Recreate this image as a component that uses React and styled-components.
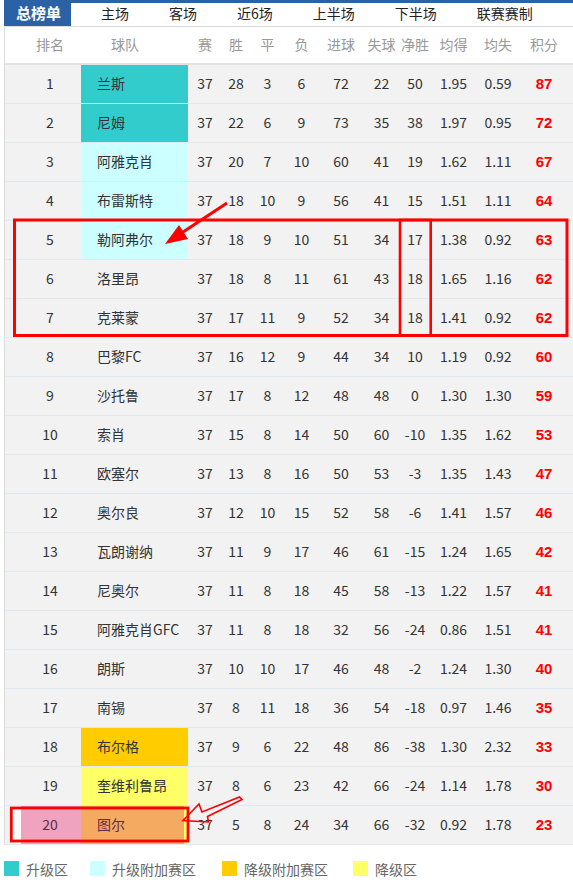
import React from 'react';
import styled, { createGlobalStyle } from 'styled-components';

const rows = [
  [1, '兰斯', 37, 28, 3, 6, 72, 22, 50, '1.95', '0.59', 87, 'up'],
  [2, '尼姆', 37, 22, 6, 9, 73, 35, 38, '1.97', '0.95', 72, 'up'],
  [3, '阿雅克肖', 37, 20, 7, 10, 60, 41, 19, '1.62', '1.11', 67, 'upPlay'],
  [4, '布雷斯特', 37, 18, 10, 9, 56, 41, 15, '1.51', '1.11', 64, 'upPlay'],
  [5, '勒阿弗尔', 37, 18, 9, 10, 51, 34, 17, '1.38', '0.92', 63, 'upPlay'],
  [6, '洛里昂', 37, 18, 8, 11, 61, 43, 18, '1.65', '1.16', 62],
  [7, '克莱蒙', 37, 17, 11, 9, 52, 34, 18, '1.41', '0.92', 62],
  [8, '巴黎FC', 37, 16, 12, 9, 44, 34, 10, '1.19', '0.92', 60],
  [9, '沙托鲁', 37, 17, 8, 12, 48, 48, 0, '1.30', '1.30', 59],
  [10, '索肖', 37, 15, 8, 14, 50, 60, -10, '1.35', '1.62', 53],
  [11, '欧塞尔', 37, 13, 8, 16, 50, 53, -3, '1.35', '1.43', 47],
  [12, '奥尔良', 37, 12, 10, 15, 52, 58, -6, '1.41', '1.57', 46],
  [13, '瓦朗谢纳', 37, 11, 9, 17, 46, 61, -15, '1.24', '1.65', 42],
  [14, '尼奥尔', 37, 11, 8, 18, 45, 58, -13, '1.22', '1.57', 41],
  [15, '阿雅克肖GFC', 37, 11, 8, 18, 32, 56, -24, '0.86', '1.51', 41],
  [16, '朗斯', 37, 10, 10, 17, 46, 48, -2, '1.24', '1.30', 40],
  [17, '南锡', 37, 8, 11, 18, 36, 54, -18, '0.97', '1.46', 35],
  [18, '布尔格', 37, 9, 6, 22, 48, 86, -38, '1.30', '2.32', 33, 'downPlay'],
  [19, '奎维利鲁昂', 37, 8, 6, 23, 42, 66, -24, '1.14', '1.78', 30, 'down'],
  [20, '图尔', 37, 5, 8, 24, 34, 66, -32, '0.92', '1.78', 23, 'down'],
];

const zoneColors = {
  up: '#33cccc',
  upPlay: '#ccffff',
  downPlay: '#ffcc00',
  down: '#ffff66',
};

const tabs = ['主场', '客场', '近6场', '上半场', '下半场', '联赛赛制'];

// header label, column width
const columns = [
  ['排名', 76],
  ['球队', 107],
  ['赛', 34],
  ['胜', 28],
  ['平', 35],
  ['负', 33],
  ['进球', 46],
  ['失球', 35],
  ['净胜', 32],
  ['均得', 45],
  ['均失', 44],
  ['积分', 53],
];

const legend = [
  ['升级区', zoneColors.up, 86],
  ['升级附加赛区', zoneColors.upPlay, 132],
  ['降级附加赛区', zoneColors.downPlay, 131],
  ['降级区', zoneColors.down, 0],
];

const GlobalStyle = createGlobalStyle`
  body {
    margin: 0;
    background: #fff;
    font-family: "Noto Sans CJK SC", "Noto Sans", sans-serif;
  }
`;

export default function App() {
  return (
    <Page>
      <GlobalStyle />
      <TabBar>
        <Tab active>总榜单</Tab>
        {tabs.map(t => <Tab key={t}>{t}</Tab>)}
      </TabBar>

      <Table>
        <colgroup>
          {columns.map(([label, w]) => <col key={label} style={{ width: w }} />)}
        </colgroup>
        <thead>
          <tr>
            {columns.map(([label], i) => (
              <HeadCell key={label} kind={i === 0 ? 'rank' : i === 1 ? 'team' : i === 11 ? 'points' : ''}>
                {label}
              </HeadCell>
            ))}
          </tr>
        </thead>
        <tbody>
          {rows.map(r => {
            const marked = r[0] === 20;
            return (
              <tr key={r[0]}>
                <RankCell marked={marked}>{r[0]}</RankCell>
                <TeamCell zone={r[12]} marked={marked}>{r[1]}</TeamCell>
                {r.slice(2, 11).map((v, i) => <Cell key={i}>{v}</Cell>)}
                <PointsCell>{r[11]}</PointsCell>
              </tr>
            );
          })}
        </tbody>
      </Table>

      <Legend>
        {legend.map(([label, color, w]) => (
          <LegendItem key={label} w={w}>
            <Swatch color={color} />
            {label}
          </LegendItem>
        ))}
      </Legend>

      <Marks viewBox="0 0 573 892">
        <rect x="14.5" y="220" width="552.5" height="115.5" fill="none" stroke="#ff0000" strokeWidth="3" />
        <rect x="400" y="220" width="30.7" height="115.5" fill="none" stroke="#ff0000" strokeWidth="2.6" />
        <rect x="11.3" y="808" width="176.7" height="33" fill="none" stroke="#ff0000" strokeWidth="2.8" />
        <line x1="227" y1="203" x2="183" y2="232" stroke="#ff0000" strokeWidth="3" />
        <polygon points="165,244 179,225 188,239" fill="#ff0000" />
        <polygon
          points="183,820.5 199,804 202,812 239.5,797 242,799.5 207.5,816.5 208.5,822"
          fill="none"
          stroke="#ff0000"
          strokeWidth="1.6"
          strokeLinejoin="miter"
        />
      </Marks>
    </Page>
  );
}

const Page = styled.div`
  position: relative;
  width: 573px;
  height: 892px;
  padding-left: 4px;
  box-sizing: border-box;
  overflow: hidden;
`

const TabBar = styled.div`
  display: flex;
  height: 26px;
  border-top: 3px solid #2b62a6;
  box-sizing: border-box;
`

const Tab = styled.div`
  display: flex;
  align-items: center;
  padding: 0 20px 3px;
  font-size: 14px;
  color: #222;
  white-space: nowrap;
  ${props => props.active && `
    margin-top: -3px;
    margin-right: 10px;
    padding: 0 10px 2px 12px;
    background: #2b62a6;
    color: #fff;
    font-size: 15px;
    font-weight: bold;
  `}
`

const Table = styled.table`
  width: 569px;
  table-layout: fixed;
  border-collapse: separate;
  border-spacing: 0;
  border-left: 1px solid #dcdcdc;
`

const HeadCell = styled.th`
  height: 39px;
  box-sizing: border-box;
  padding: 0 0 3px;
  border-top: 1px solid #dcdcdc;
  border-bottom: 2px solid #e2e2e2;
  background: #fff;
  color: #999;
  font-size: 14px;
  font-weight: normal;
  text-align: ${props => props.kind === 'team' ? 'left' : 'center'};
  padding-left: ${props => props.kind === 'rank' ? '14px' : props.kind === 'team' ? '30px' : '0'};
  padding-right: ${props => props.kind === 'points' ? '5px' : '0'};
`

const Cell = styled.td`
  height: 39px;
  box-sizing: border-box;
  padding: 0 0 2px;
  border-bottom: 1px solid #dfe9f2;
  background: #f2f2f2;
  color: #333;
  font-size: 14px;
  text-align: center;
  white-space: nowrap;
`

const RankCell = styled(Cell)`
  padding-left: 14px;
  ${props => props.marked && `
    background: linear-gradient(to right, #f2f2f2 0 7px, #fbfbfb 7px 16px, #efa3bf 16px);
    color: #5e2a48;
  `}
`

const TeamCell = styled(Cell)`
  text-align: left;
  padding-left: 16px;
  background: ${props => zoneColors[props.zone] || '#f2f2f2'};
  ${props => props.marked && `
    background: linear-gradient(to right, #f5aa62 0 103px, #ffff66 103px);
    color: #5e2a48;
  `}
`

const PointsCell = styled(Cell)`
  padding-right: 5px;
  color: #ff0000;
  font-family: "Liberation Sans", sans-serif;
  font-size: 15px;
  font-weight: bold;
`

const Legend = styled.div`
  display: flex;
  align-items: center;
  height: 15px;
  margin-top: 16px;
`

const LegendItem = styled.div`
  display: flex;
  align-items: center;
  width: ${props => props.w ? props.w + 'px' : 'auto'};
  flex-shrink: 0;
  color: #666;
  font-size: 14px;
  white-space: nowrap;
`

const Swatch = styled.span`
  width: 15px;
  height: 15px;
  margin-right: 7px;
  background: ${props => props.color};
`

const Marks = styled.svg`
  position: absolute;
  top: 0;
  left: 0;
  width: 573px;
  height: 892px;
  pointer-events: none;
`
